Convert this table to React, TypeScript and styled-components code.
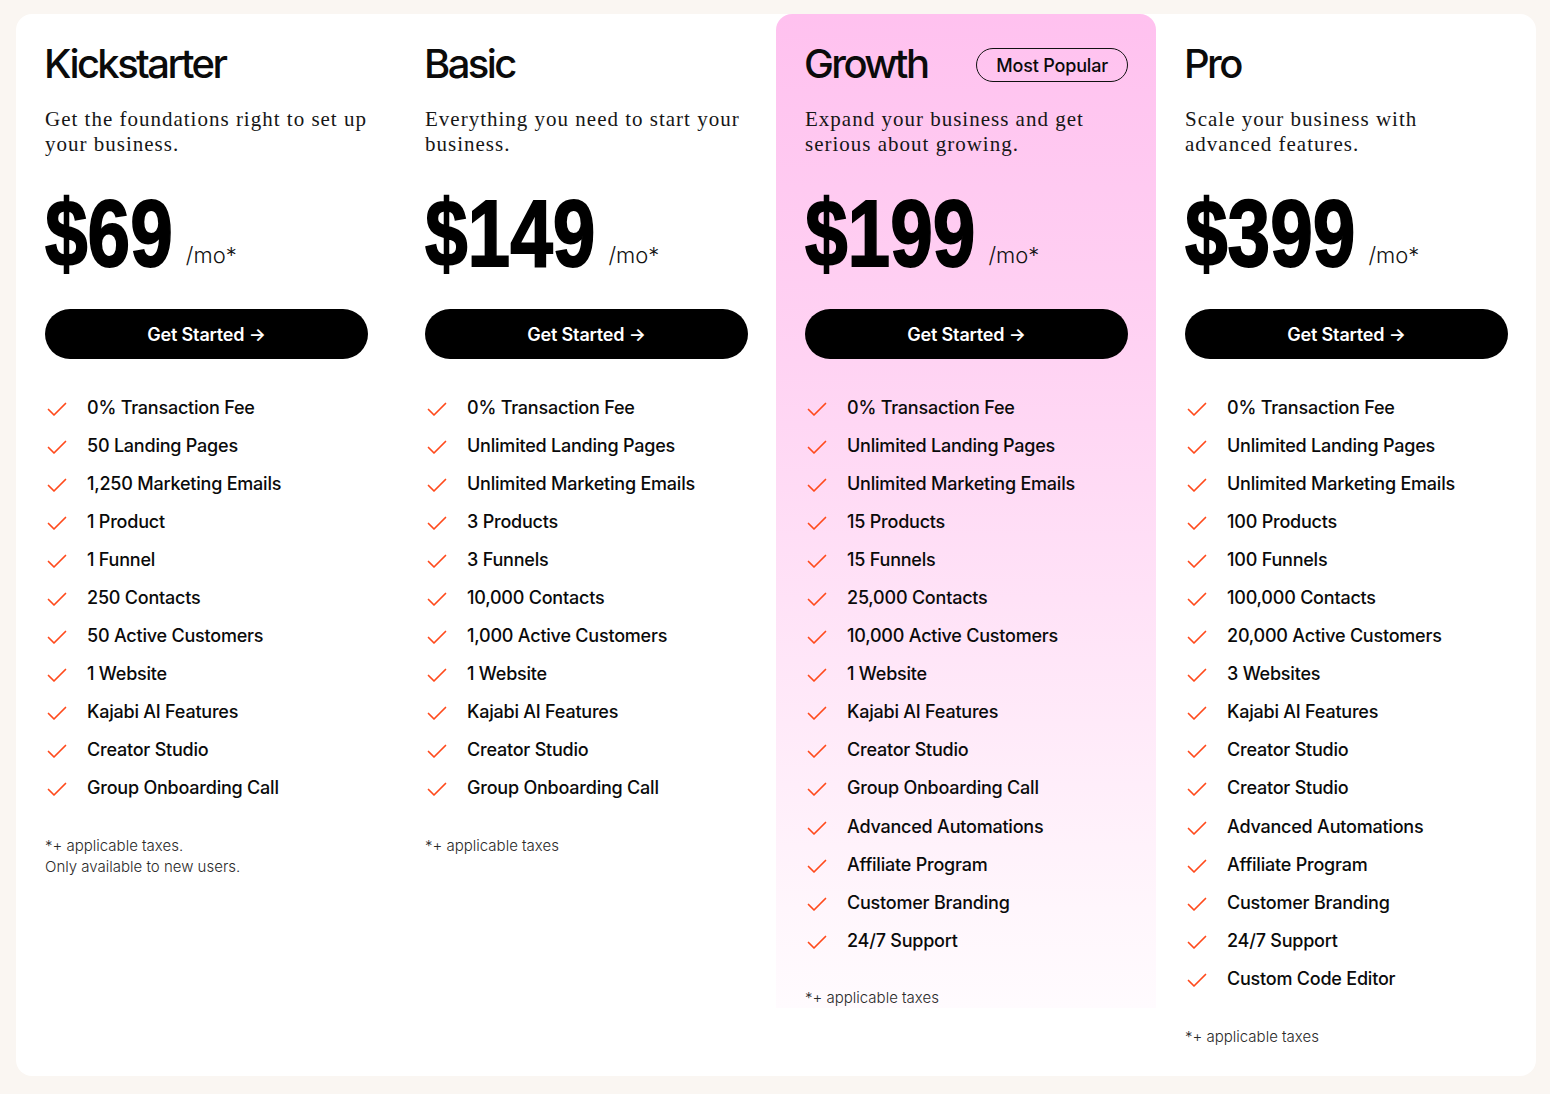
import React from "react";
import styled, { createGlobalStyle } from "styled-components";

const Global = createGlobalStyle`
  html, body { margin: 0; padding: 0; background: #faf6f2; }
  body { font-family: Inter, "Noto Sans", sans-serif; color: #0b0b0b; -webkit-font-smoothing: antialiased; }
  * { box-sizing: border-box; }
`;

const Page = styled.div`
  padding: 14px 14px 19px 16px;
  min-height: 1094px;
`;

const Board = styled.div`
  width: 1520px;
  background: #ffffff;
  border-radius: 16px;
  display: grid;
  grid-template-columns: repeat(4, 380px);
  align-items: start;
  padding-bottom: 29px;
`;

const Column = styled.section<{ $featured?: boolean }>`
  padding: 26px 28px 0 29px;
  border-radius: 16px 16px 0 0;
  background: ${(p) =>
    p.$featured
      ? "linear-gradient(180deg, #ffc1ef 0%, #ffd3f3 35%, #ffe6f8 65%, #fff6fc 90%, #fffbfe 100%)"
      : "transparent"};
`;

const TitleRow = styled.div`
  display: flex;
  align-items: center;
  justify-content: space-between;
  height: 48px;
`;

const Title = styled.h2`
  margin: 0 0 0 -1px;
  font-family: Inter, sans-serif;
  font-weight: 500;
  font-size: 40px;
  line-height: 48px;
  letter-spacing: -0.065em;
  color: #0b0b0b;
`;

const Badge = styled.span`
  display: inline-flex;
  align-items: center;
  height: 34px;
  padding: 0 19px;
  border: 1.5px solid #111;
  border-radius: 999px;
  font-family: Inter, sans-serif;
  font-weight: 500;
  font-size: 18px;
  letter-spacing: -0.01em;
  margin-top: 2px;
`;

const Desc = styled.p`
  margin: 19px 0 0;
  max-width: 322.5px;
  font-family: "Liberation Serif", "DejaVu Serif", serif;
  font-size: 21px;
  line-height: 25px;
  letter-spacing: 1px;
  color: #161616;
  min-height: 50px;
`;

const PriceRow = styled.div`
  margin-top: 30px;
  display: flex;
  align-items: flex-end;
  gap: 13px;
  height: 94px;
`;

const Amount = styled.span<{ $chars: number }>`
  display: inline-block;
  font-family: "Liberation Sans", Arial, sans-serif;
  font-weight: 700;
  font-size: 94px;
  line-height: 94px;
  color: #000;
  -webkit-text-stroke: 1.8px #000;
  transform: scaleX(0.815);
  transform-origin: left center;
  margin-right: ${(p) => -p.$chars * 52.3 * 0.185}px;
`;

const Per = styled.span`
  font-family: Inter, sans-serif;
  font-weight: 300;
  font-size: 22px;
  line-height: 22px;
  margin-bottom: 15px;
  color: #111;
`;

const CTA = styled.button`
  margin-top: 28px;
  width: 100%;
  height: 50px;
  border: none;
  border-radius: 999px;
  background: #000;
  color: #fff;
  font-family: Inter, sans-serif;
  font-weight: 600;
  font-size: 18px;
  letter-spacing: -0.01em;
  cursor: pointer;
`;

const Features = styled.ul`
  list-style: none;
  margin: 29px 0 0;
  padding: 0;
`;

const Feature = styled.li`
  display: flex;
  align-items: center;
  height: 38.1px;
  font-family: Inter, sans-serif;
  font-weight: 500;
  font-size: 18px;
  letter-spacing: -0.012em;
  color: #0a0a0a;
`;

const CheckBox = styled.span`
  width: 42px;
  flex: none;
  display: flex;
  align-items: center;
  padding-left: 2px;
  padding-top: 5px;
`;

const Note = styled.p`
  margin: 28px 0 0;
  font-family: Inter, sans-serif;
  font-weight: 300;
  font-size: 15px;
  line-height: 21px;
  color: #2a2a2a;
`;

const Check = () => (
  <svg width="20" height="16" viewBox="0 0 20 16" fill="none">
    <polyline
      points="1.5,7.5 7,13 18.5,1.5"
      stroke="#ff4a1c"
      strokeWidth="1.7"
      strokeLinecap="round"
      strokeLinejoin="round"
    />
  </svg>
);

type Plan = {
  name: string;
  desc: string;
  price: string;
  features: string[];
  note: string[];
  featured?: boolean;
};

const plans: Plan[] = [
  {
    name: "Kickstarter",
    desc: "Get the foundations right to set up your business.",
    price: "$69",
    features: [
      "0% Transaction Fee",
      "50 Landing Pages",
      "1,250 Marketing Emails",
      "1 Product",
      "1 Funnel",
      "250 Contacts",
      "50 Active Customers",
      "1 Website",
      "Kajabi AI Features",
      "Creator Studio",
      "Group Onboarding Call",
    ],
    note: ["*+ applicable taxes.", "Only available to new users."],
  },
  {
    name: "Basic",
    desc: "Everything you need to start your business.",
    price: "$149",
    features: [
      "0% Transaction Fee",
      "Unlimited Landing Pages",
      "Unlimited Marketing Emails",
      "3 Products",
      "3 Funnels",
      "10,000 Contacts",
      "1,000 Active Customers",
      "1 Website",
      "Kajabi AI Features",
      "Creator Studio",
      "Group Onboarding Call",
    ],
    note: ["*+ applicable taxes"],
  },
  {
    name: "Growth",
    desc: "Expand your business and get serious about growing.",
    price: "$199",
    featured: true,
    features: [
      "0% Transaction Fee",
      "Unlimited Landing Pages",
      "Unlimited Marketing Emails",
      "15 Products",
      "15 Funnels",
      "25,000 Contacts",
      "10,000 Active Customers",
      "1 Website",
      "Kajabi AI Features",
      "Creator Studio",
      "Group Onboarding Call",
      "Advanced Automations",
      "Affiliate Program",
      "Customer Branding",
      "24/7 Support",
    ],
    note: ["*+ applicable taxes"],
  },
  {
    name: "Pro",
    desc: "Scale your business with advanced features.",
    price: "$399",
    features: [
      "0% Transaction Fee",
      "Unlimited Landing Pages",
      "Unlimited Marketing Emails",
      "100 Products",
      "100 Funnels",
      "100,000 Contacts",
      "20,000 Active Customers",
      "3 Websites",
      "Kajabi AI Features",
      "Creator Studio",
      "Creator Studio",
      "Advanced Automations",
      "Affiliate Program",
      "Customer Branding",
      "24/7 Support",
      "Custom Code Editor",
    ],
    note: ["*+ applicable taxes"],
  },
];

export default function App() {
  return (
    <>
      <Global />
      <Page>
        <Board>
          {plans.map((p) => (
            <Column key={p.name} $featured={p.featured}>
              <TitleRow>
                <Title>{p.name}</Title>
                {p.featured && <Badge>Most Popular</Badge>}
              </TitleRow>
              <Desc>{p.desc}</Desc>
              <PriceRow>
                <Amount $chars={p.price.length}>{p.price}</Amount>
                <Per>/mo*</Per>
              </PriceRow>
              <CTA>Get Started →</CTA>
              <Features>
                {p.features.map((f, i) => (
                  <Feature key={i}>
                    <CheckBox>
                      <Check />
                    </CheckBox>
                    {f}
                  </Feature>
                ))}
              </Features>
              <Note>
                {p.note.map((n, i) => (
                  <React.Fragment key={i}>
                    {i > 0 && <br />}
                    {n}
                  </React.Fragment>
                ))}
              </Note>
            </Column>
          ))}
        </Board>
      </Page>
    </>
  );
}
